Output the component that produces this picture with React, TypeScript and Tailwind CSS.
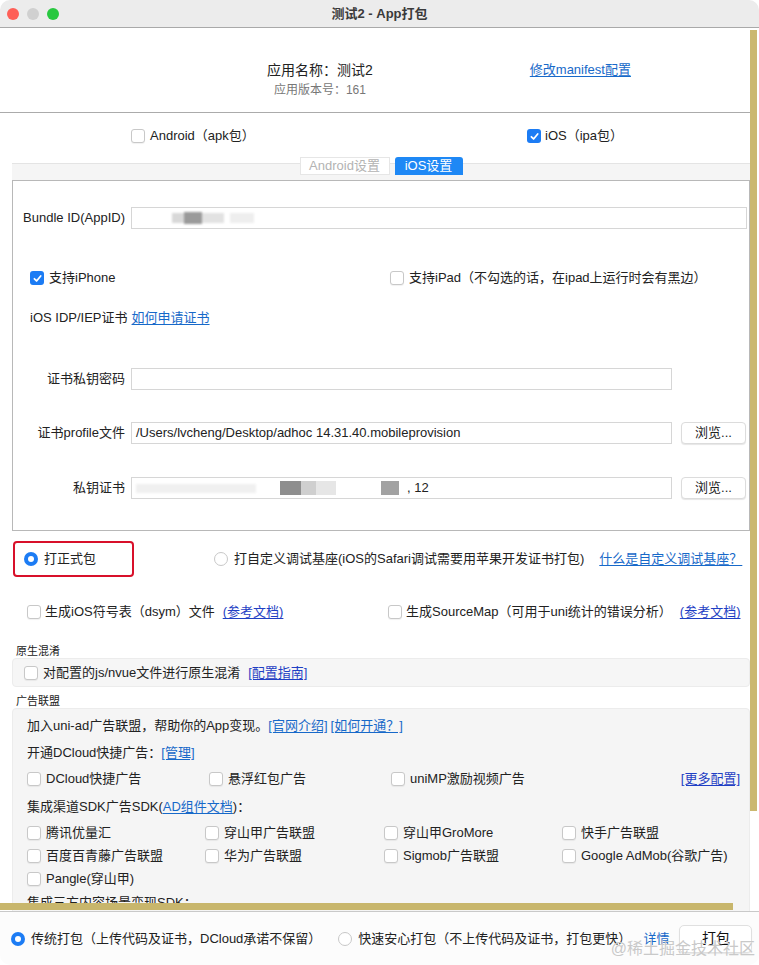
import React from 'react';

const FONT = "font-['Liberation_Sans','Noto_Sans_CJK_SC',sans-serif]";

const Check = ({ on = false }: { on?: boolean }) =>
  on ? (
    <span className="inline-flex h-[14px] w-[14px] shrink-0 items-center justify-center rounded-[3px] bg-[#1c7cf4]">
      <svg viewBox="0 0 12 12" className="h-[11px] w-[11px]">
        <path d="M2.6 6.3 5 8.7 9.5 3.2" fill="none" stroke="white" strokeWidth="1.9" strokeLinecap="round" strokeLinejoin="round" />
      </svg>
    </span>
  ) : (
    <span className="inline-block h-[14px] w-[14px] shrink-0 rounded-[3px] border border-[#c8c8c8] bg-white shadow-[0_1px_1px_rgba(0,0,0,0.06)]" />
  );

const Radio = ({ on = false }: { on?: boolean }) =>
  on ? (
    <span className="inline-flex h-[14px] w-[14px] shrink-0 items-center justify-center rounded-full bg-[#1c7cf4]">
      <span className="h-[6px] w-[6px] rounded-full bg-white" />
    </span>
  ) : (
    <span className="inline-block h-[14px] w-[14px] shrink-0 rounded-full border border-[#c8c8c8] bg-white" />
  );

const Link = ({ children, dark = false }: { children: React.ReactNode; dark?: boolean }) => (
  <span className={`underline underline-offset-2 ${dark ? 'text-[#1f3fc4]' : 'text-[#1769c9]'}`}>{children}</span>
);

const Field = ({ label, children, button = false, wide = false }: { label: string; children?: React.ReactNode; button?: boolean; wide?: boolean }) => (
  <div className="flex h-[22px] items-center">
    <div className="w-[112px] text-right text-[13px] text-[#222]">{label}</div>
    <div className={`relative ml-[6px] flex h-[22px] items-center overflow-hidden border border-[#d6d6d6] bg-white px-[4px] text-[13px] text-[#222] ${wide ? 'w-[616px]' : 'w-[541px]'}`}>
      {children}
    </div>
    {button && (
      <div className="ml-[9px] flex h-[22px] w-[65px] items-center justify-center rounded-[4px] border border-[#dcdcdc] bg-white text-[13px] text-[#222] shadow-[0_1px_1px_rgba(0,0,0,0.1)]">
        浏览...
      </div>
    )}
  </div>
);

const AdItem = ({ text }: { text: string }) => (
  <div className="flex items-center gap-[5px]">
    <Check />
    <span>{text}</span>
  </div>
);

export default function App() {
  return (
    <div className={`${FONT} h-[965px] w-[759px] overflow-hidden bg-white text-[#222]`}>
      <div className="flex h-full flex-col overflow-hidden rounded-[10px]">
        {/* title bar */}
        <div className="relative flex h-[28px] shrink-0 items-center justify-center border-b border-[#a9a9a9] bg-[#ececec]">
          <div className="absolute left-[7px] top-[8px] flex gap-[8px]">
            <span className="h-[12px] w-[12px] rounded-full bg-[#fe5f57]" />
            <span className="h-[12px] w-[12px] rounded-full bg-[#d0d0d0]" />
            <span className="h-[12px] w-[12px] rounded-full bg-[#28c840]" />
          </div>
          <span className="text-[13px] font-bold text-[#3a3a3a]">测试2 - App打包</span>
        </div>

        {/* scroll area */}
        <div className="relative flex-1 overflow-hidden border-b border-[#c9c9c9] bg-white">
          <div className="w-[750px]">
            {/* header */}
            <div className="flex h-[85px] items-start border-b border-[#ababab] pt-[32px]">
              <div className="ml-[267px] flex flex-col items-center">
                <div className="text-[14px] leading-[20px] text-[#222]">应用名称：测试2</div>
                <div className="mt-[2px] text-[12px] leading-[16px] text-[#777]">应用版本号：161</div>
              </div>
              <div className="ml-[157px] text-[13px] leading-[20px]">
                <Link>修改manifest配置</Link>
              </div>
            </div>

            {/* platform checkboxes */}
            <div className="flex h-[43px] items-center pt-[3px] text-[13px]">
              <div className="ml-[131px] flex w-[396px] items-center gap-[5px]">
                <Check />
                <span>Android（apk包）</span>
              </div>
              <div className="flex items-center gap-[4px]">
                <Check on />
                <span>iOS（ipa包）</span>
              </div>
            </div>

            {/* tabs */}
            <div className="ml-[12px] flex h-[24px] w-[738px] justify-center bg-[linear-gradient(to_bottom,transparent_7px,#e4e4e4_7px,#e4e4e4_8px,#f5f5f5_8px)] pt-[1px]">
              <div className="flex h-[18px] items-center gap-[5px] text-[13px]">
                <div className="flex h-[18px] w-[90px] items-center justify-center border border-[#e6e6e6] bg-white text-[#b3b3b3]">Android设置</div>
                <div className="flex h-[18px] w-[68px] items-center justify-center rounded-t-[3px] bg-[#1e88f5] text-white">iOS设置</div>
              </div>
            </div>

            {/* iOS panel */}
            <div className="ml-[12px] w-[738px] border border-[#b8b8b8] pb-[31px] pt-[26px]">
              <Field label="Bundle ID(AppID)" wide>
                <div className="flex items-center blur-[1.2px]">
                  <span className="ml-[36px] h-[10px] w-[12px] bg-[#d8d8d8]" />
                  <span className="h-[12px] w-[18px] bg-[#9a9a9a]" />
                  <span className="h-[10px] w-[22px] bg-[#e2e2e2]" />
                  <span className="ml-[6px] h-[10px] w-[24px] bg-[#eeeeee]" />
                </div>
              </Field>

              <div className="mt-[39px] flex h-[20px] items-center text-[13px]">
                <div className="ml-[17px] flex w-[360px] items-center gap-[5px]">
                  <Check on />
                  <span>支持iPhone</span>
                </div>
                <div className="flex items-center gap-[5px]">
                  <Check />
                  <span>支持iPad（不勾选的话，在ipad上运行时会有黑边）</span>
                </div>
              </div>

              <div className="ml-[17px] mt-[20px] flex h-[20px] items-center gap-[4px] text-[13px]">
                <span>iOS IDP/IEP证书</span>
                <Link>如何申请证书</Link>
              </div>

              <div className="mt-[40px]">
                <Field label="证书私钥密码" />
              </div>
              <div className="mt-[32px]">
                <Field label="证书profile文件" button>
                  <span>/Users/lvcheng/Desktop/adhoc 14.31.40.mobileprovision</span>
                </Field>
              </div>
              <div className="mt-[33px]">
                <Field label="私钥证书" button>
                  <div className="flex items-center">
                    <span className="h-[9px] w-[120px] bg-[#f0f0f0] blur-[1px]" />
                    <span className="ml-[24px] h-[14px] w-[21px] bg-[#8e8e8e] blur-[0.6px]" />
                    <span className="h-[14px] w-[15px] bg-[#cfcfcf] blur-[0.6px]" />
                    <span className="h-[14px] w-[20px] bg-[#e6e6e6] blur-[0.6px]" />
                    <span className="ml-[45px] h-[14px] w-[18px] bg-[#a2a2a2] blur-[0.6px]" />
                    <span className="ml-[8px]">, 12</span>
                  </div>
                </Field>
              </div>
            </div>

            {/* package type */}
            <div className="mt-[10px] flex h-[36px] items-center text-[13px]">
              <div className="ml-[13px] flex h-[36px] w-[121px] items-center gap-[6px] rounded-[4px] border-2 border-[#d8102a] pl-[9px]">
                <Radio on />
                <span>打正式包</span>
              </div>
              <div className="ml-[80px] flex items-center gap-[6px]">
                <Radio />
                <span>打自定义调试基座(iOS的Safari调试需要用苹果开发证书打包)</span>
              </div>
              <div className="ml-[15px]">
                <Link>什么是自定义调试基座？</Link>
              </div>
            </div>

            <div className="mt-[25px] flex h-[20px] items-center text-[13px]">
              <div className="ml-[27px] flex w-[361px] items-center gap-[4px]">
                <Check />
                <span>生成iOS符号表（dsym）文件</span>
                <span className="ml-[4px]"><Link dark>(参考文档)</Link></span>
              </div>
              <div className="flex items-center gap-[4px]">
                <Check />
                <span>生成SourceMap（可用于uni统计的错误分析）</span>
                <span className="ml-[4px]"><Link dark>(参考文档)</Link></span>
              </div>
            </div>

            {/* obfuscation */}
            <div className="ml-[16px] mt-[22px] h-[14px] text-[11px] leading-[14px] text-[#222]">原生混淆</div>
            <div className="ml-[12px] flex h-[29px] w-[738px] items-center gap-[5px] rounded-[4px] border border-[#ececec] bg-[#f6f6f6] pl-[11px] text-[13px]">
              <Check />
              <span>对配置的js/nvue文件进行原生混淆</span>
              <span className="ml-[3px]"><Link dark>[配置指南]</Link></span>
            </div>

            {/* ads */}
            <div className="ml-[16px] mt-[7px] h-[14px] text-[11px] leading-[14px] text-[#222]">广告联盟</div>
            <div className="ml-[12px] w-[738px] rounded-[4px] border border-[#ececec] bg-[#f5f5f5] pb-[20px] pl-[14px] pr-[9px] pt-[8px] text-[13px] leading-[18px]">
              <div className="flex items-center">
                <span>加入uni-ad广告联盟，帮助你的App变现。</span>
                <Link>[官网介绍]</Link>
                <span className="ml-[3px]"><Link>[如何开通？]</Link></span>
              </div>
              <div className="mt-[9px] flex items-center">
                <span>开通DCloud快捷广告：</span>
                <Link>[管理]</Link>
              </div>
              <div className="mt-[8px] flex items-center">
                <div className="w-[182px]"><AdItem text="DCloud快捷广告" /></div>
                <div className="w-[182px]"><AdItem text="悬浮红包广告" /></div>
                <div className="flex-1"><AdItem text="uniMP激励视频广告" /></div>
                <Link dark>[更多配置]</Link>
              </div>
              <div className="mt-[10px] flex items-center">
                <span>集成渠道SDK广告SDK(</span>
                <Link>AD组件文档</Link>
                <span>)：</span>
              </div>
              <div className="mt-[8px] grid grid-cols-[178px_179px_178px_1fr] gap-y-[5px]">
                <AdItem text="腾讯优量汇" />
                <AdItem text="穿山甲广告联盟" />
                <AdItem text="穿山甲GroMore" />
                <AdItem text="快手广告联盟" />
                <AdItem text="百度百青藤广告联盟" />
                <AdItem text="华为广告联盟" />
                <AdItem text="Sigmob广告联盟" />
                <AdItem text="Google AdMob(谷歌广告)" />
                <AdItem text="Pangle(穿山甲)" />
              </div>
              <div className="mt-[6px]">集成三方内容场景变现SDK：</div>
            </div>
          </div>

          {/* scrollbar thumbs */}
          <div className="absolute right-[2px] top-[2px] h-[781px] w-[7px] bg-[#cbb86f]" />
          <div className="absolute bottom-[1px] left-0 h-[7px] w-[733px] bg-[#c8b66c]" />
        </div>

        {/* bottom bar */}
        <div className="relative flex h-[53px] shrink-0 items-center bg-[#fcfcfc] pl-[11px] text-[13px]">
          <div className="flex items-center gap-[6px]">
            <Radio on />
            <span>传统打包（上传代码及证书，DCloud承诺不保留）</span>
          </div>
          <div className="ml-[17px] flex items-center gap-[6px]">
            <Radio />
            <span>快速安心打包（不上传代码及证书，打包更快）</span>
          </div>
          <span className="ml-[12px] text-[#1769c9]">详情</span>
          <div className="ml-[10px] flex h-[28px] w-[73px] items-center justify-center rounded-[5px] border border-[#e0e0e0] bg-white text-[14px] text-[#111] shadow-[0_1px_1px_rgba(0,0,0,0.08)]">
            打包
          </div>
          <div className="pointer-events-none absolute bottom-[4px] right-[4px] text-[16px] text-[#c9c9c9]">@稀土掘金技术社区</div>
        </div>
      </div>
    </div>
  );
}
